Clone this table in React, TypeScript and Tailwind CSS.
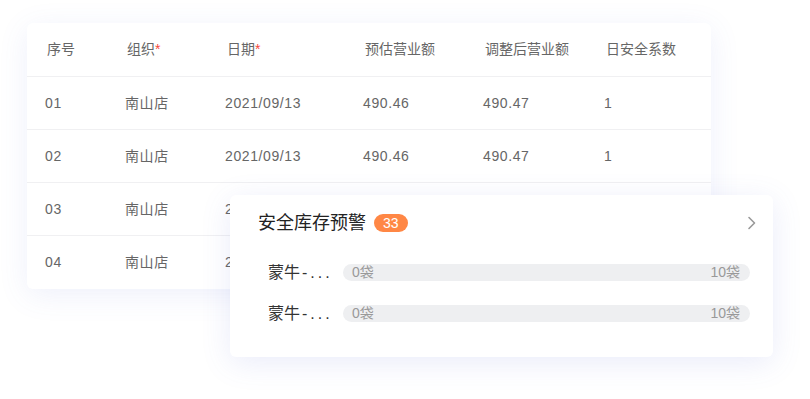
import React from 'react';

const headers = [
  { label: '序号' },
  { label: '组织', required: true },
  { label: '日期', required: true },
  { label: '预估营业额' },
  { label: '调整后营业额' },
  { label: '日安全系数' },
];

const rows = [
  ['01', '南山店', '2021/09/13', '490.46', '490.47', '1'],
  ['02', '南山店', '2021/09/13', '490.46', '490.47', '1'],
  ['03', '南山店', '2021/09/13', '490.46', '490.47', '1'],
  ['04', '南山店', '2021/09/13', '490.46', '490.47', '1'],
];

const stock = [
  { name: '蒙牛-纯牛奶', min: '0袋', max: '10袋' },
  { name: '蒙牛-酸牛奶', min: '0袋', max: '10袋' },
];

const cols = 'grid grid-cols-[80px_100px_138px_120px_121px_1fr] pl-[18px]';

const App: React.FC = () => {
  return (
    <div
      className="relative w-[810px] h-[399px] bg-white overflow-hidden"
      style={{ fontFamily: '"Liberation Sans", "Noto Sans CJK SC", sans-serif' }}
    >
      {/* Table card */}
      <div className="ml-[27px] mt-[23px] w-[684px] bg-white rounded-md shadow-[0_6px_30px_rgba(90,110,220,0.10)] overflow-hidden">
        <div className={`${cols} h-[54px] items-center border-b border-[#f0f0f2] text-[14px] text-[#666]`}>
          {headers.map((h) => (
            <div key={h.label} className="pl-[2px]">
              {h.label}
              {h.required && <span className="text-[#f5483b]">*</span>}
            </div>
          ))}
        </div>
        {rows.map((r, i) => (
          <div
            key={i}
            className={`${cols} h-[53px] items-center text-[14px] tracking-[0.6px] text-[#666] ${i < rows.length - 1 ? 'border-b border-[#f0f0f2]' : ''}`}
          >
            {r.map((c, j) => (
              <div key={j}>{c}</div>
            ))}
          </div>
        ))}
      </div>

      {/* Alert card overlapping the table */}
      <div className="absolute left-[230px] top-[195px] w-[543px] h-[162px] bg-white rounded-md shadow-[0_6px_30px_rgba(90,110,220,0.13)] pl-[28px] pr-[18px] pt-[17px]">
        <div className="flex items-center justify-between h-[22px]">
          <div className="flex items-center gap-[8px]">
            <span className="text-[18px] leading-[22px] text-[#222]">安全库存预警</span>
            <span className="h-[18px] px-[9px] rounded-full bg-[#ff8745] text-white text-[14px] leading-[18px] font-medium">33</span>
          </div>
          <svg width="10" height="14" viewBox="0 0 10 14" fill="none" className="-mr-[1px]">
            <path d="M3 1.5 L8.5 7 L3 12.5" stroke="#999" strokeWidth="1.6" strokeLinecap="round" strokeLinejoin="round" />
          </svg>
        </div>
        <div className="mt-[30px] flex flex-col gap-[24px] pl-[10px] pr-[5px]">
          {stock.map((s, i) => (
            <div key={i} className="flex items-center h-[17px]">
              <span className="w-[75px] shrink-0 text-[16px] leading-[17px] text-[#333] whitespace-nowrap">
                {s.name.slice(0, 2)}<span className="tracking-[3px] pl-[2px]">-...</span>
              </span>
              <div className="flex-1 h-[17px] rounded-full bg-[#eeeff1] flex items-center justify-between pl-[9px] pr-[10px] text-[14px] leading-[17px] text-[#999]">
                <span>{s.min}</span>
                <span>{s.max}</span>
              </div>
            </div>
          ))}
        </div>
      </div>
    </div>
  );
};

export default App;
